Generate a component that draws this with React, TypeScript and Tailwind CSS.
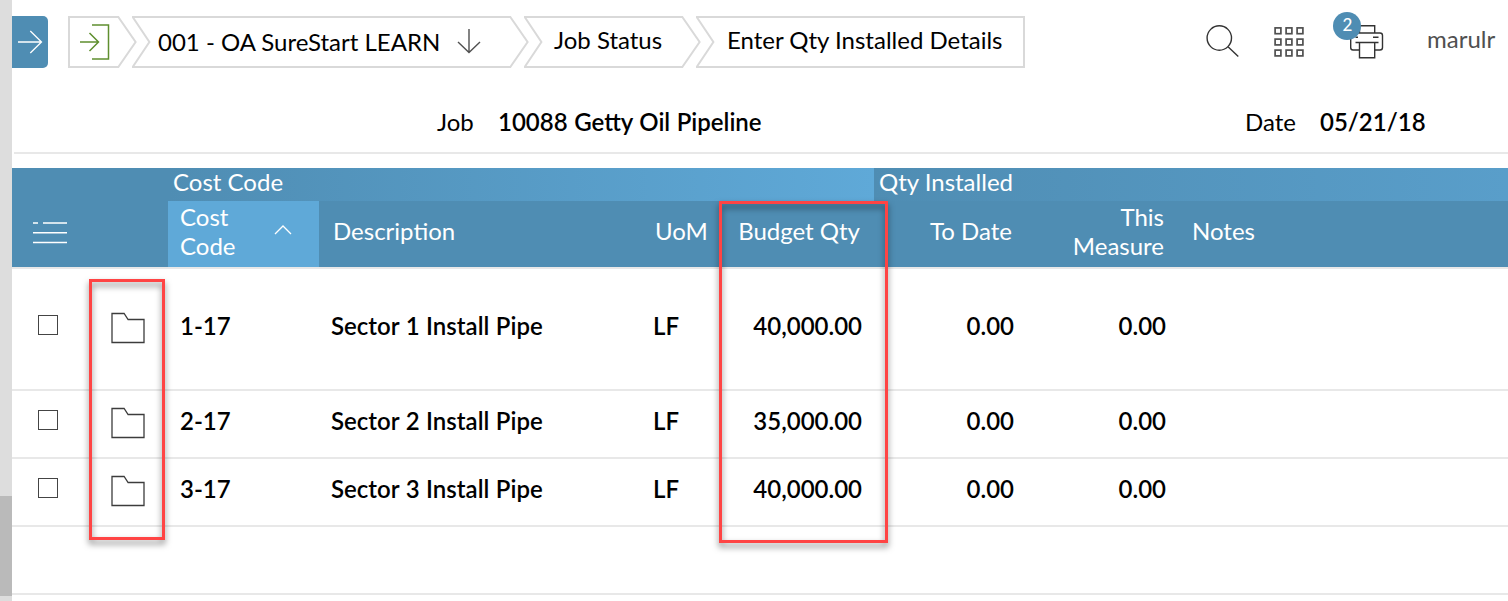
import React from "react";

const rows = [
  { code: "1-17", desc: "Sector 1 Install Pipe", uom: "LF", budget: "40,000.00", toDate: "0.00", measure: "0.00", tall: true },
  { code: "2-17", desc: "Sector 2 Install Pipe", uom: "LF", budget: "35,000.00", toDate: "0.00", measure: "0.00", tall: false },
  { code: "3-17", desc: "Sector 3 Install Pipe", uom: "LF", budget: "40,000.00", toDate: "0.00", measure: "0.00", tall: false },
];

const columns =
  "grid grid-cols-[77px_79px_151px_321px_79px_155px_152px_152px_1fr]";

function Tip() {
  return (
    <svg className="block h-[52px] w-[19px] shrink-0" viewBox="0 0 19 52" fill="none" stroke="#d9d9d9" strokeWidth="2">
      <path d="M-1 1H0.3L17.6 26L0.3 51H-1" />
    </svg>
  );
}

function Notch() {
  return (
    <svg className="-ml-[5px] block h-[52px] w-[19px] shrink-0" viewBox="0 0 19 52" fill="none" stroke="#d9d9d9" strokeWidth="2">
      <path d="M20 1H0.7L17.4 26L0.7 51H20" />
    </svg>
  );
}

function FolderIcon() {
  return (
    <svg className="block h-8 w-9" viewBox="0 0 36 32" fill="none" stroke="#3c3c3c" strokeWidth="1.3">
      <path d="M1 1.5H13.1L17.1 7.5H33V30.5H1Z" />
    </svg>
  );
}

function Header() {
  return (
    <header className="flex h-[84px] items-start pt-4">
      <button className="flex h-[52px] w-9 items-center rounded-r-[5px] bg-[#4f8db3]">
        <svg className="h-6 w-9" viewBox="0 0 36 24" fill="none" stroke="#fff" strokeWidth="1.3">
          <path d="M6 12H29.5M18.3 1L29.5 12L18.3 23" />
        </svg>
      </button>
      <nav className="ml-5 flex h-[52px]">
        <div className="flex h-[52px] w-[50px] items-center border-2 border-r-0 border-[#d9d9d9]">
          <svg className="ml-[9px] h-9 w-[34px] shrink-0" viewBox="0 0 34 36" fill="none" stroke="#5f8f2f" strokeWidth="1.5">
            <path d="M13 1H29.5V35H13" />
            <path d="M1 18H19.5M10.5 9L19.5 18L10.5 27" />
          </svg>
        </div>
        <Tip />
        <Notch />
        <div className="flex w-[359px] items-center border-y-2 border-[#d9d9d9] pl-[7px]">
          <span>001 - OA SureStart LEARN</span>
          <svg className="ml-[17px] h-[26px] w-6" viewBox="0 0 24 26" fill="none" stroke="#505050" strokeWidth="1.4">
            <path d="M12 0V23.5M1 13L12 23.5L23 13" />
          </svg>
        </div>
        <Tip />
        <Notch />
        <div className="flex w-[139px] items-center border-y-2 border-[#d9d9d9] pb-[4px] pl-[11px]">Job Status</div>
        <Tip />
        <Notch />
        <div className="flex w-[310px] items-center border-2 border-l-0 border-[#d9d9d9] pb-[4px] pl-3">
          Enter Qty Installed Details
        </div>
      </nav>
      <div className="ml-[181px] flex h-[52px] items-center">
        <svg className="h-[34px] w-[34px]" viewBox="0 0 34 34" fill="none" stroke="#333" strokeWidth="1.4">
          <circle cx="13.3" cy="13" r="12.2" />
          <path d="M22 21.8L32.3 31.5" />
        </svg>
        <svg className="ml-[33px] h-8 w-8" viewBox="0 0 32 32" fill="none" stroke="#505050" strokeWidth="1.7">
          {[1.9, 13.1, 24.1].map((y) =>
            [2.1, 13.1, 24.1].map((x) => <rect key={`${x}-${y}`} x={x} y={y} width="5.8" height="5.8" />)
          )}
        </svg>
        <div className="relative ml-[45px]">
          <svg className="h-[34px] w-9" viewBox="0 0 36 34" fill="none" stroke="#333" strokeWidth="1.4">
            <path d="M9.5 8V0.7H24.7V8" />
            <path d="M9.5 25H3Q0.7 25 0.7 22.5V10.5Q0.7 8 3 8H30Q32.5 8 32.5 10.5V22.5Q32.5 25 30 25H24.7" />
            <path d="M5.5 17.5H28.5M23 12.2H28.5M9.5 17.5V32.8H24.7V17.5M5.5 12.2H8" />
          </svg>
          <span className="absolute -left-[17px] -top-[13px] flex h-7 w-7 items-center justify-center rounded-full bg-[#4f8db3] pb-[3px] pl-[1px] text-[17px] font-medium text-white">
            2
          </span>
        </div>
        <span className="ml-[41px] pb-[6px] text-[#505050]">marulr</span>
      </div>
    </header>
  );
}

function JobBar() {
  return (
    <section className="ml-0.5 flex h-[70px] items-center border-b-2 border-[#e8e8e8] pt-2">
      <div className="flex w-[808px] items-center pl-[423px]">
        <span className="w-[61px]">Job</span>
        <span className="font-semibold [word-spacing:0.6px]">10088 Getty Oil Pipeline</span>
      </div>
      <div className="flex items-center pl-[423px]">
        <span className="w-[75px]">Date</span>
        <span className="font-semibold">05/21/18</span>
      </div>
    </section>
  );
}

function Table() {
  return (
    <section className="mt-3.5">
      <div className="bg-[#4f8db3] text-white">
        <div className="flex h-[33px] items-center pl-[156px]">
          <div className="flex h-full w-[706px] items-center bg-gradient-to-r from-[#4f8db3] to-[#5fa9d8] pb-[5px] pl-[5px]">
            Cost Code
          </div>
          <div className="flex h-full flex-1 items-center bg-gradient-to-r from-[#4f8db3] to-[#599eca] pb-[5px] pl-[5px]">
            Qty Installed
          </div>
        </div>
        <div className={`${columns} h-[66px] items-center`}>
          <div className="pb-[2px] pl-5">
            <svg className="h-6 w-[36px]" viewBox="0 0 36 24" fill="none" stroke="#fff" strokeWidth="1.5">
              <path d="M1 2H6M11 2H35M1 11.8H35M1 21.5H35" />
            </svg>
          </div>
          <div />
          <div className="flex h-full items-center justify-between bg-[#5fa9d8] pb-[7px] pl-3 pr-[27px]">
            <span className="w-[60px] whitespace-normal leading-[29px]">Cost Code</span>
            <svg className="mb-0.5 h-3 w-[18px]" viewBox="0 0 18 12" fill="none" stroke="#fff" strokeWidth="1.3">
              <path d="M1 10L9 2L17 10" />
            </svg>
          </div>
          <div className="pb-[6px] pl-[14px]">Description</div>
          <div className="pb-[6px] pl-[15px]">UoM</div>
          <div className="pb-[6px] pr-[14px] text-right">Budget Qty</div>
          <div className="pb-[6px] pr-[14px] text-right">To Date</div>
          <div className="whitespace-normal pb-[7px] pl-10 pr-[14px] text-right leading-[29px]">This Measure</div>
          <div className="pb-[6px] pl-[14px]">Notes</div>
        </div>
      </div>
      <div className="h-0.5 bg-[#e8e8e8]" />
      {rows.map((r) => (
        <div
          key={r.code}
          className={`${columns} ${r.tall ? "h-[122px]" : "h-[68px]"} items-center border-b-2 border-[#e8e8e8] font-semibold`}
        >
          <div className="pb-[9px] pl-[26px]">
            <div className="h-5 w-5 border-[1.5px] border-[#444]" />
          </div>
          <div className="pb-[2px] pl-[22px]">
            <FolderIcon />
          </div>
          <div className="pb-[6px] pl-3">{r.code}</div>
          <div className="pb-[6px] pl-3 [word-spacing:0.6px]">{r.desc}</div>
          <div className="pb-[6px] pl-[13px]">{r.uom}</div>
          <div className="pb-[6px] pr-3 text-right">{r.budget}</div>
          <div className="pb-[6px] pr-3 text-right">{r.toDate}</div>
          <div className="pb-[6px] pr-3 text-right">{r.measure}</div>
          <div />
        </div>
      ))}
      <div className="h-[68px] border-b-2 border-[#e8e8e8]" />
    </section>
  );
}

export default function App() {
  return (
    <div className="relative flex h-[601px] w-[1508px] overflow-hidden bg-white font-['Lato',sans-serif] text-[24px] leading-[30px] text-black">
      <aside className="w-3 shrink-0 bg-[#dddddd] pt-[496px]">
        <div className="h-[100px] bg-[#bababa]" />
      </aside>
      <main className="min-w-0 flex-1 whitespace-nowrap">
        <Header />
        <JobBar />
        <Table />
      </main>
      <div className="absolute left-[89px] top-[279px] h-[261px] w-[76px] border-[3px] border-[#ff4444] drop-shadow-[0_4px_3px_rgba(0,0,0,0.5)]" />
      <div className="absolute left-[719px] top-[201px] h-[342px] w-[169px] border-[3px] border-[#ff4444] drop-shadow-[0_4px_3px_rgba(0,0,0,0.5)]" />
    </div>
  );
}
